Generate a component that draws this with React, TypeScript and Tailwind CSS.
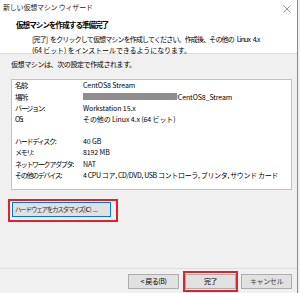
import React from "react";

const rows: { label: string; value: React.ReactNode; tight?: boolean }[] = [
  { label: "名前:", value: "CentOS8 Stream" },
  {
    label: "場所:",
    value: (
      <span className="flex items-center">
        <span className="relative z-10 inline-block h-[7px] w-[94px] bg-[#8e8e8e]" />
        <span className="-ml-[3px]">¥CentOS8_Stream</span>
      </span>
    ),
  },
  { label: "バージョン:", value: "Workstation 15.x" },
  { label: "OS:", value: "その他の Linux 4.x (64 ビット)" },
  { label: "", value: "" },
  { label: "ハード ディスク:", value: "40 GB" },
  { label: "メモリ:", value: "8192 MB" },
  { label: "ネットワーク アダプタ:", value: "NAT" },
  {
    label: "その他のデバイス:",
    value: "4 CPU コア, CD/DVD, USB コントローラ, プリンタ, サウンド カード",
    tight: true,
  },
];

function WinButton({ children }: { children: React.ReactNode }) {
  return (
    <div className="flex h-[15px] w-[51px] items-center justify-center border border-[#adadad] bg-[#e1e1e1] text-[7px] tracking-[-0.4px] text-black">
      {children}
    </div>
  );
}

export default function App() {
  return (
    <div
      className="flex h-[293px] w-[300px] overflow-hidden bg-[#f0f0f0] text-black"
      style={{ fontFamily: '"Noto Sans CJK JP", "Noto Sans", sans-serif' }}
    >
      <div className="flex h-full w-[298px] flex-col border-r border-[#8a8a8a]">
        {/* header */}
        <div className="h-[54px] border-b border-[#dcdcdc] bg-white">
          <div className="flex h-[14px] items-center justify-between pl-[3px] pr-[6px]">
            <span className="text-[7px] leading-none tracking-[-0.2px] text-[#222]">新しい仮想マシン ウィザード</span>
            <svg width="8" height="8" viewBox="0 0 8 8" className="mt-[4px]">
              <path d="M0.5 0.5 L7.5 7.5 M7.5 0.5 L0.5 7.5" stroke="#7a7a7a" strokeWidth="0.8" />
            </svg>
          </div>
          <div className="mt-[5px] whitespace-nowrap pl-[16px] text-[7.5px] font-bold leading-[11px] tracking-[-0.9px]">
            仮想マシンを作成する準備完了
          </div>
          <div className="mt-[4px] whitespace-nowrap pl-[32px] text-[7px] leading-[10.5px]">
            <div className="tracking-[-0.85px] [word-spacing:2px]">
              [完了] をクリックして仮想マシンを作成してください。作成後、その他の Linux 4.x
            </div>
            <div className="tracking-[-0.1px]">(64 ビット) をインストールできるようになります。</div>
          </div>
        </div>

        {/* body */}
        <div className="flex-1 pl-[11px]">
          <div className="mt-[5px] whitespace-nowrap text-[7px] leading-[11px] tracking-[-0.4px]">
            仮想マシンは、次の設定で作成されます。
          </div>
          <div className="mt-[9px] h-[111px] w-[281px] border border-[#c2c2c2] bg-white pl-[3px] text-[7px]">
            {rows.map((r, i) => (
              <div key={i} className="flex h-[11.2px] items-center whitespace-nowrap">
                <span className="w-[68px] shrink-0 tracking-[-1.3px]">{r.label}</span>
                <span className={r.tight ? "tracking-[-0.35px]" : "tracking-[-0.1px]"}>{r.value}</span>
              </div>
            ))}
          </div>
          <div className="-ml-[3px] mt-[9px] h-[23px] w-[110px] border-2 border-[#e3212b] pl-[2px] pt-px">
            <div className="flex h-[15px] w-[99px] items-center overflow-hidden whitespace-nowrap border border-[#0078d7] bg-[#e1e1e1] pl-[2px] text-[6.6px] text-[#333]">
              <span className="tracking-[-1.3px]">ハードウェアをカスタマイズ</span>
              <span className="tracking-[-0.3px]">
                (<span className="font-bold">C</span>) ...
              </span>
            </div>
          </div>
        </div>

        {/* footer */}
        <div className="flex h-[25px] items-center border-t border-[#dfdfdf] pl-[128px]">
          <WinButton>&lt; 戻る(B)</WinButton>
          <div className="ml-[4px] flex h-[21px] w-[55px] items-center justify-center border-2 border-[#e3212b]">
            <WinButton>完了</WinButton>
          </div>
          <div className="ml-[3px]">
            <WinButton>
              <span className="text-[#444]">キャンセル</span>
            </WinButton>
          </div>
        </div>
      </div>
    </div>
  );
}
